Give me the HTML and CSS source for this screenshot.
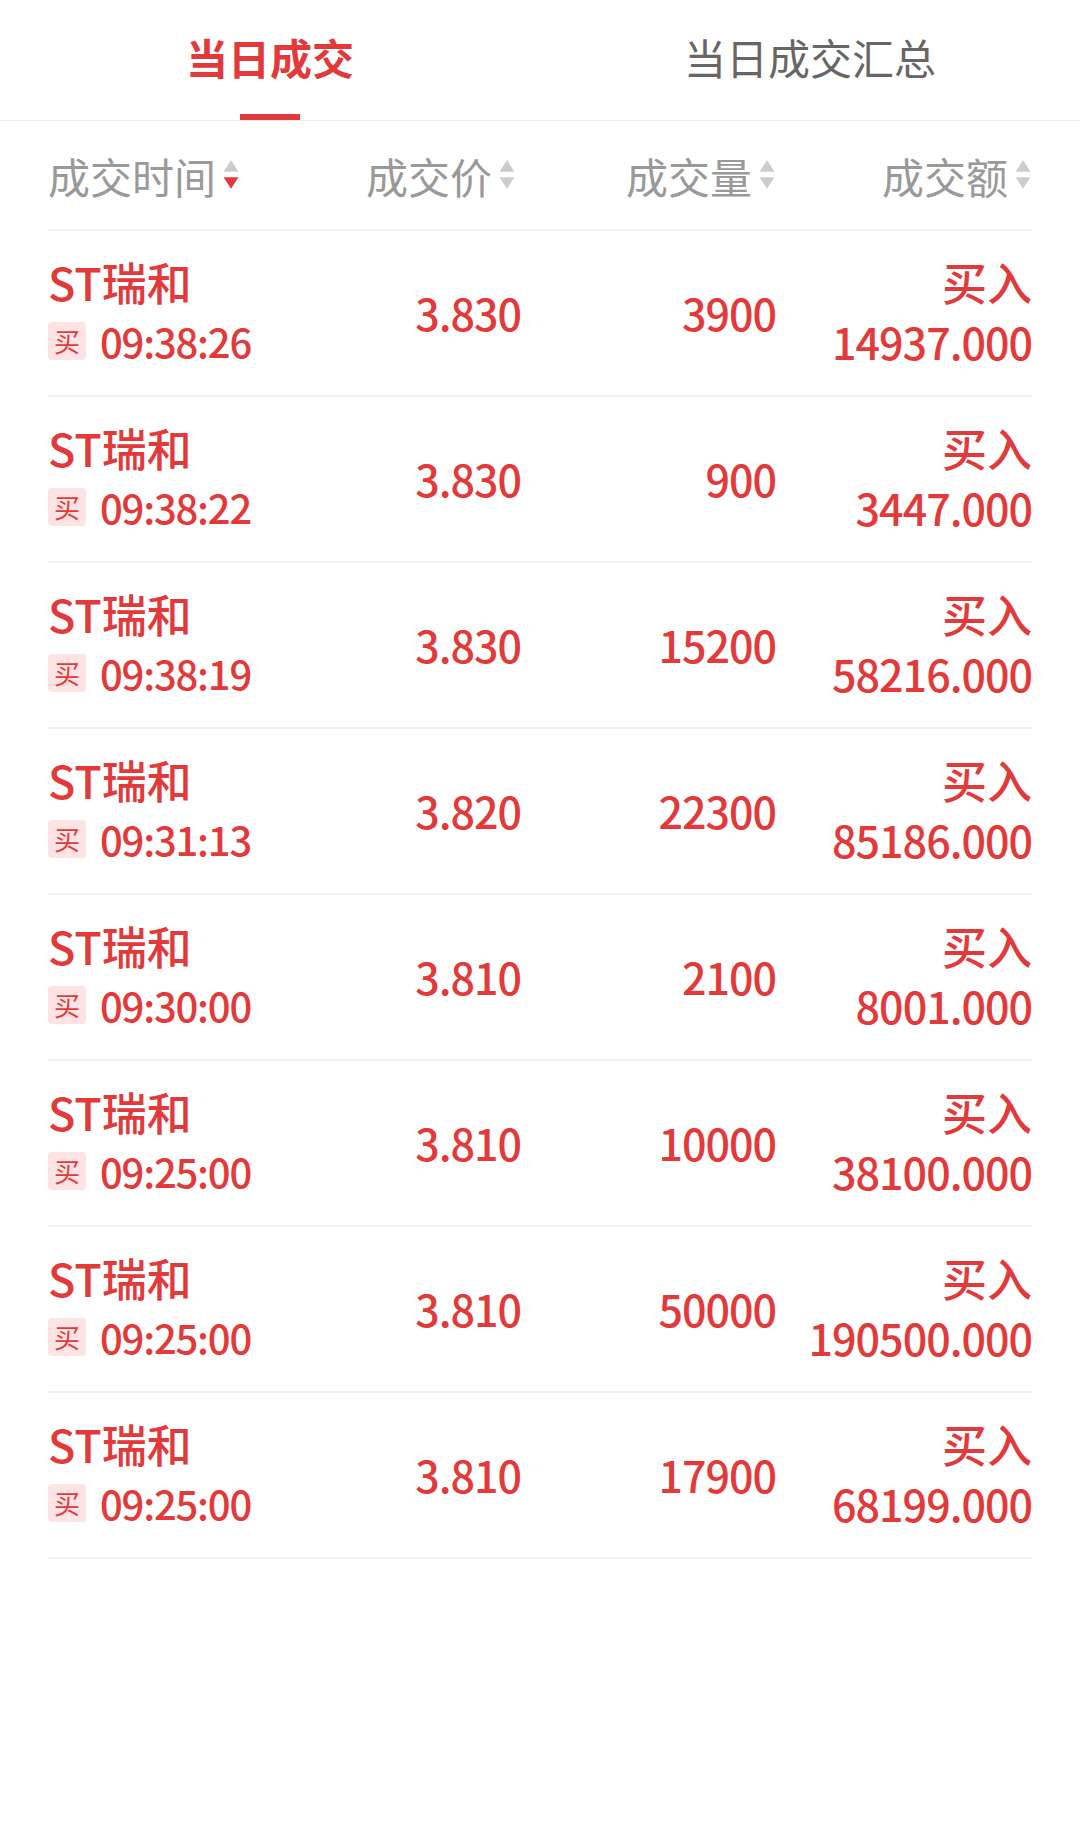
FILE: index.html
```
<!DOCTYPE html>
<html lang="zh-CN">
<head>
  <meta charset="UTF-8">
  <meta name="viewport" content="width=device-width, initial-scale=1.0">
  <title>当日成交</title>
  <link rel="stylesheet" href="styles.css">
</head>
<body>
  <div class="tabs">
    <div class="tab active"><span>当日成交</span><i class="bar"></i></div>
    <div class="tab"><span>当日成交汇总</span><i class="bar"></i></div>
  </div>

  <div class="list">
    <div class="head">
      <div class="th left">成交时间<svg class="sort" viewBox="0 0 16 30"><polygon points="8,1 15,12 1,12" fill="#cccccc"/><polygon class="on" points="1,17 15,17 8,28"/></svg></div>
      <div class="th col2">成交价<svg class="sort" viewBox="0 0 16 30"><polygon points="8,1 15,12 1,12" fill="#cccccc"/><polygon points="1,17 15,17 8,28" fill="#cccccc"/></svg></div>
      <div class="th">成交量<svg class="sort" viewBox="0 0 16 30"><polygon points="8,1 15,12 1,12" fill="#cccccc"/><polygon points="1,17 15,17 8,28" fill="#cccccc"/></svg></div>
      <div class="th">成交额<svg class="sort" viewBox="0 0 16 30"><polygon points="8,1 15,12 1,12" fill="#cccccc"/><polygon points="1,17 15,17 8,28" fill="#cccccc"/></svg></div>
    </div>

    <div class="row">
      <div class="cell left"><div class="name">ST瑞和</div><div class="time"><span class="tag">买</span>09:38:26</div></div>
      <div class="cell num">3.830</div>
      <div class="cell num">3900</div>
      <div class="cell"><div class="side">买入</div><div class="num">14937.000</div></div>
    </div>
    <div class="row">
      <div class="cell left"><div class="name">ST瑞和</div><div class="time"><span class="tag">买</span>09:38:22</div></div>
      <div class="cell num">3.830</div>
      <div class="cell num">900</div>
      <div class="cell"><div class="side">买入</div><div class="num">3447.000</div></div>
    </div>
    <div class="row">
      <div class="cell left"><div class="name">ST瑞和</div><div class="time"><span class="tag">买</span>09:38:19</div></div>
      <div class="cell num">3.830</div>
      <div class="cell num">15200</div>
      <div class="cell"><div class="side">买入</div><div class="num">58216.000</div></div>
    </div>
    <div class="row">
      <div class="cell left"><div class="name">ST瑞和</div><div class="time"><span class="tag">买</span>09:31:13</div></div>
      <div class="cell num">3.820</div>
      <div class="cell num">22300</div>
      <div class="cell"><div class="side">买入</div><div class="num">85186.000</div></div>
    </div>
    <div class="row">
      <div class="cell left"><div class="name">ST瑞和</div><div class="time"><span class="tag">买</span>09:30:00</div></div>
      <div class="cell num">3.810</div>
      <div class="cell num">2100</div>
      <div class="cell"><div class="side">买入</div><div class="num">8001.000</div></div>
    </div>
    <div class="row">
      <div class="cell left"><div class="name">ST瑞和</div><div class="time"><span class="tag">买</span>09:25:00</div></div>
      <div class="cell num">3.810</div>
      <div class="cell num">10000</div>
      <div class="cell"><div class="side">买入</div><div class="num">38100.000</div></div>
    </div>
    <div class="row">
      <div class="cell left"><div class="name">ST瑞和</div><div class="time"><span class="tag">买</span>09:25:00</div></div>
      <div class="cell num">3.810</div>
      <div class="cell num">50000</div>
      <div class="cell"><div class="side">买入</div><div class="num">190500.000</div></div>
    </div>
    <div class="row">
      <div class="cell left"><div class="name">ST瑞和</div><div class="time"><span class="tag">买</span>09:25:00</div></div>
      <div class="cell num">3.810</div>
      <div class="cell num">17900</div>
      <div class="cell"><div class="side">买入</div><div class="num">68199.000</div></div>
    </div>
  </div>
</body>
</html>
```

FILE: styles.css
```
body {
  margin: 0;
  background: #fff;
  font-family: "Noto Sans CJK SC", "Noto Sans", sans-serif;
  color: #e23a3a;
}
.tabs {
  display: flex;
  height: 120px;
  border-bottom: 1px solid #ededed;
}
.tab {
  flex: 1;
  display: flex;
  flex-direction: column;
  align-items: center;
  justify-content: space-between;
  padding-top: 32px;
  font-size: 42px;
  line-height: 50px;
  color: #666;
}
.tab .bar {
  display: block;
  width: 60px;
  height: 6px;
}
.tab.active {
  color: #e23a3a;
  font-weight: bold;
}
.tab.active .bar {
  background: #e23a3a;
}
/* tabel */
.list {
  margin: 0 48px;
}
.head, .row {
  display: grid;
  grid-template-columns: 218px 255px 255px 256px;
  align-items: center;
  border-bottom: 2px solid #f0f0f0;
}
.head {
  height: 108px;
}
.th {
  display: flex;
  align-items: center;
  justify-content: flex-end;
  font-size: 42px;
  color: #999;
}
.th.left {
  justify-content: flex-start;
}
.th.col2 {
  padding-right: 5px;
}
.sort {
  width: 18px;
  height: 32px;
  margin-left: 6px;
}
.sort .on {
  fill: #e23a3a;
}
.row {
  height: 164px;
}
.cell {
  text-align: right;
  font-size: 43px;
  line-height: 56px;
  font-weight: 500;
  letter-spacing: -1px;
  margin-top: -3px;
}
.cell.left {
  text-align: left;
}
.name, .side {
  font-size: 45px;
  letter-spacing: 0;
  margin-bottom: 3px;
}
.time {
  display: flex;
  align-items: center;
  font-size: 40px;
  letter-spacing: -1.2px;
}
.tag {
  display: inline-flex;
  align-items: center;
  justify-content: center;
  width: 38px;
  height: 38px;
  margin-right: 14px;
  border-radius: 4px;
  background: #fde3e3;
  font-size: 26px;
  font-weight: normal;
  letter-spacing: 0;
  line-height: 1;
}
```
